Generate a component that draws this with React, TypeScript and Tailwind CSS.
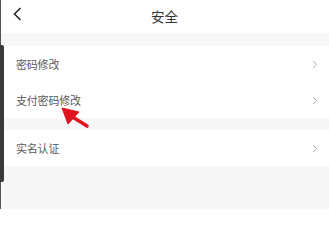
import React from 'react';

const rows = [
  { label: '密码修改', gapBefore: false },
  { label: '支付密码修改', gapBefore: false },
  { label: '实名认证', gapBefore: true },
];

const Chevron = () => (
  <svg width="6" height="9" viewBox="0 0 6 9" fill="none">
    <path d="M1 1l3.5 3.5L1 8" stroke="#b0b0b0" strokeWidth="1" />
  </svg>
);

export default function App() {
  return (
    <div
      className="relative w-[329px] h-[209px] overflow-hidden bg-[#f7f7f7]"
      style={{ fontFamily: '"Noto Sans CJK SC", "Noto Sans", sans-serif' }}
    >
      {/* header */}
      <div className="relative flex items-center justify-center h-[33px] bg-white">
        <svg className="absolute left-[12px] top-[7px]" width="11" height="14" viewBox="0 0 11 14" fill="none">
          <path d="M8.5 1L2.5 7l6 6" stroke="#222" strokeWidth="1.5" />
        </svg>
        <span className="text-[13.5px] text-[#333]">安全</span>
      </div>

      <div className="mt-[13px] flex flex-col">
        {rows.map((row) => (
          <div
            key={row.label}
            className={`flex items-center justify-between h-[36px] bg-white pl-[16px] pr-[11px] ${row.gapBefore ? 'mt-[12px]' : ''}`}
          >
            <span className="text-[11px] tracking-[-0.2px] text-[#5a5a5a]">{row.label}</span>
            <Chevron />
          </div>
        ))}
      </div>

      {/* red annotation arrow */}
      <svg className="absolute left-[58px] top-[104px]" width="34" height="26" viewBox="0 0 34 26" fill="none">
        <path d="M29 22L13 12" stroke="#e0141e" strokeWidth="3.6" strokeLinecap="round" />
        <path d="M4 4l17 4-11 12z" fill="#e0141e" strokeLinejoin="round" stroke="#e0141e" strokeWidth="1" />
      </svg>

      {/* screen edge */}
      <div className="absolute left-0 top-0 w-[1px] h-full bg-[#555]" />
      <div className="absolute left-0 top-[45px] w-[4px] h-[137px] rounded-r-[2px] bg-[#3a3a3a]" />
    </div>
  );
}
